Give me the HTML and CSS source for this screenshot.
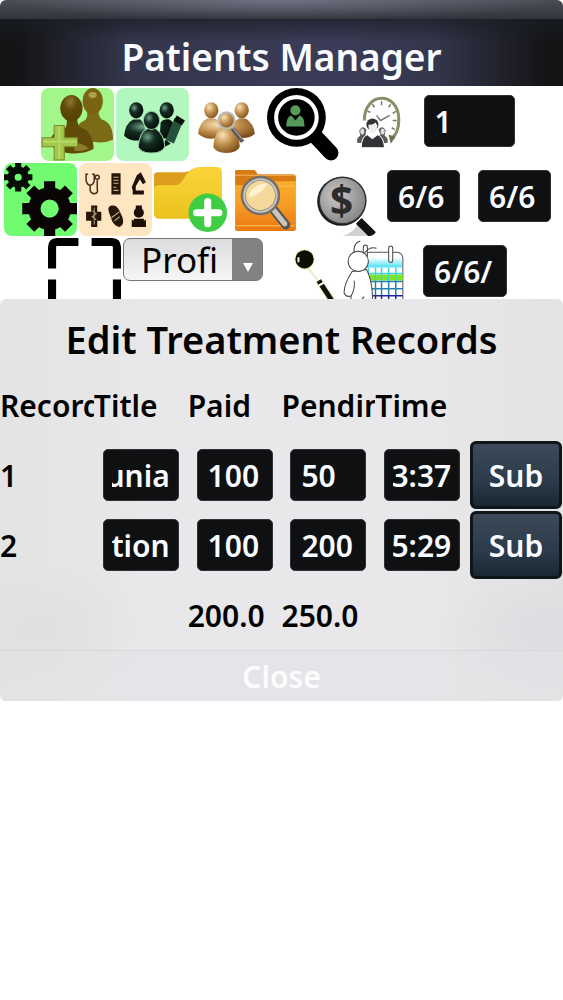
FILE: index.html
```html
<!DOCTYPE html>
<html lang="en">
<head>
  <meta charset="UTF-8">
  <meta name="viewport" content="width=device-width, initial-scale=1.0">
  <title>Patients Manager</title>
  <link rel="stylesheet" href="styles.css">
</head>
<body>

  <header class="title-bar">
    <h1>Patients Manager</h1>
  </header>

  <!-- TOOLBAR -->
  <main class="toolbar">
    <div class="tool-row">
      <button class="tool mint" aria-label="Add patient">
        <svg viewBox="0 0 72 72">
          <defs>
            <radialGradient id="olive" cx="45%" cy="25%" r="80%"><stop offset="0" stop-color="#8f7a2a"/><stop offset=".4" stop-color="#5f4a0a"/><stop offset="1" stop-color="#554000"/></radialGradient>
            <radialGradient id="ink" cx="35%" cy="35%" r="70%"><stop offset="0" stop-color="#6fa385"/><stop offset=".4" stop-color="#142d22"/><stop offset="1" stop-color="#020a06"/></radialGradient>
            <radialGradient id="gold" cx="35%" cy="30%" r="75%"><stop offset="0" stop-color="#f8e2b4"/><stop offset=".5" stop-color="#c1904e"/><stop offset="1" stop-color="#80501c"/></radialGradient>
          </defs>
          <path d="M35 42 Q36 34 43 32 Q47 29 45 21 H57 Q56 28 60 31 Q71 34 71 51 Q62 55 51 53 Z" fill="#7a6c16"/>
          <ellipse cx="51" cy="13" rx="10" ry="13" fill="#7a6414"/>
          <ellipse cx="51" cy="7" rx="4" ry="3" fill="#b0a050"/>
          <path d="M9 52 Q10 44 22 41 Q27 38 25 28 H36 Q35 36 39 39 Q51 42 52 60 Q42 66 26 64 Q10 62 9 52 Z" fill="#604c08"/>
          <path d="M33 54 Q43 55 47 60 Q41 63 33 62 Z" fill="#8d7c2c"/>
          <ellipse cx="30" cy="20" rx="11" ry="13" fill="url(#olive)"/>
          <path d="M13 37 H23 V49 H36 V58 H23 V71 H13 V58 H1 V49 H13 Z" fill="#a3c84d" stroke="#788c28"/>
          <path d="M18 38 V70 M2 53 H35" stroke="#b8d968" stroke-width="2"/>
        </svg>
      </button>
      <button class="tool pale-mint" aria-label="Edit patient">
        <svg viewBox="0 0 72 72">
          <path d="M8 47 Q9 35 17 31 H24 Q30 36 29 51 Q15 54 8 47 Z M43 50 L44 34 Q47 30 53 31 Q60 35 59 49 Z" fill="url(#ink)"/>
          <ellipse cx="20" cy="22" rx="7" ry="8" fill="url(#ink)"/>
          <ellipse cx="50" cy="22" rx="7" ry="8" fill="url(#ink)"/>
          <path d="M62 31 L53 53" stroke="#26523c" stroke-width="9"/>
          <path d="M60 27 L68 32 L65 37 L57 32 Z" fill="#07110b"/>
          <path d="M49 51 L46 59 L54 55 Z" fill="#07110b"/>
          <path d="M22 58 Q23 44 31 40 H39 Q48 46 48 58 Q46 64 35 64 Q24 64 22 58 Z" fill="url(#ink)" stroke="#94caa3"/>
          <ellipse cx="35" cy="32" rx="8" ry="9" fill="url(#ink)" stroke="#94caa3"/>
        </svg>
      </button>
      <button class="tool" aria-label="Find patient">
        <svg viewBox="0 0 72 72">
          <path d="M7 45 Q8 34 16 30 H24 Q32 35 32 47 Q17 54 7 45 Z M40 46 Q40 34 47 30 H54 Q62 35 63 45 Q54 53 40 46 Z" fill="url(#gold)"/>
          <ellipse cx="20" cy="22" rx="7" ry="8" fill="url(#gold)"/>
          <ellipse cx="50" cy="22" rx="7" ry="8" fill="url(#gold)"/>
          <path d="M22 58 Q23 43 30 39 H40 Q48 45 48 58 Q46 64 35 64 Q24 64 22 58 Z" fill="url(#gold)"/>
          <circle cx="35" cy="32" r="8" fill="url(#gold)" stroke="#b9bbb9" stroke-width="2"/>
          <path d="M41 40 L51 53" stroke="#59595b" stroke-width="4"/>
          <path d="M41 39 L51 51" stroke="#b5b5b8"/>
        </svg>
      </button>
      <button class="tool" aria-label="View patient">
        <svg viewBox="0 0 72 72">
          <path d="M48 47 L64 64" stroke="#000" stroke-width="15" stroke-linecap="round"/>
          <circle cx="30" cy="29" r="29" fill="#000"/>
          <circle cx="30" cy="29" r="20" fill="none" stroke="#fff" stroke-width="4"/>
          <circle cx="29" cy="22" r="5" fill="#579b59"/>
          <path d="M20 38 Q20 28 25 27 L29 32 L33 27 Q38 28 38 38 Z" fill="#579b59"/>
        </svg>
      </button>
      <button class="tool" aria-label="Waiting list">
        <svg viewBox="0 0 72 72">
          <path d="M23 32 C23 3 57 3 57 31 Q57 43 51 49" fill="none" stroke="#8b8e67" stroke-width="3"/>
          <path d="M47 46 L54 48 L49 55 Z" fill="#6d704f"/>
          <path d="M40 13 V17 M31 16 L33 19 M49 16 L47 19 M26 23 L29 24 M54 23 L51 25 M55 32 H51 M53 41 L50 39" stroke="#777b58" stroke-width="1.5"/>
          <path d="M35 27 L39 32 L48 27" fill="none" stroke="#777" stroke-width="1.5"/>
          <path d="M16 54 Q15 49 19 47 L18 42 Q21 36 25 41 L24 47 L27 49 V55 Z M36 55 L37 48 L39 46 L37 41 Q41 36 44 42 L43 47 Q47 49 46 54 Z" fill="#595959"/>
          <ellipse cx="21" cy="43" rx="2" ry="3" fill="#ddd"/>
          <ellipse cx="41" cy="43" rx="2" ry="3" fill="#ddd"/>
          <path d="M20 59 Q20 48 26 46 L31 50 L36 46 Q42 48 43 59 Z" fill="#333237" stroke="#fff"/>
          <circle cx="31" cy="36" r="6" fill="#333237"/>
          <path d="M27 36 Q31 37 34 34 L36 37 Q35 44 31 45 Q27 43 27 36 Z" fill="#eee"/>
        </svg>
      </button>
      <input class="field number" type="text" value="1" aria-label="Patient number">
    </div>

    <div class="tool-row">
      <button class="tool green" aria-label="Settings">
        <svg viewBox="0 0 72 72">
          <g stroke="#080d03">
            <circle cx="14" cy="14" r="7" fill="none" stroke-width="7"/>
            <path d="M14 0 V8 M14 20 V28 M0 14 H8 M20 14 H28 M4 4 L9 9 M19 19 L24 24 M24 4 L19 9 M9 19 L4 24" stroke-width="6"/>
          </g>
          <g stroke="#080504">
            <circle cx="45" cy="45" r="15" fill="none" stroke-width="12"/>
            <path d="M45 18 V30 M45 60 V72 M18 45 H30 M60 45 H72 M26 26 L35 35 M55 55 L64 64 M64 26 L55 35 M35 55 L26 64" stroke-width="11"/>
          </g>
        </svg>
      </button>
      <button class="tool cream" aria-label="Treatments">
        <svg viewBox="0 0 72 72">
          <g fill="none" stroke="#42301d" stroke-width="1.5">
            <path d="M9 11 H7 V17 Q8 22 11 22 Q15 21 15 17 V11 H13 M11 22 V27 Q12 31 16 30 Q19 30 18 25 V17"/>
            <circle cx="18" cy="14" r="2"/>
          </g>
          <path d="M32 10 H41 V31 H32 Z" fill="#251607"/>
          <path d="M34 14 H39 M34 17 H39 M34 20 H39 M34 24 H37 M34 27 H39" stroke="#ceb490"/>
          <path d="M57 12 L61 9 L66 19 L63 21 L60 16 L56 23 V27 H64 V31 H53 V27 L52 24 Z" fill="#1d1006"/>
          <path d="M12 42 H18 V48 H22 V57 H18 V63 H12 V57 H7 V48 H12 Z" fill="#251607"/>
          <path d="M15 44 V61 M13 47 L17 50 L13 53 L17 56" fill="none" stroke="#b29b7c"/>
          <path d="M30 50 Q27 43 32 42 Q37 41 40 47 L43 54 Q45 61 40 63 Q36 63 33 58 Z" fill="#251607"/>
          <path d="M32 54 L40 48 M35 57 L40 53" stroke="#cfb694"/>
          <circle cx="59" cy="49" r="5" fill="#1d1006"/>
          <path d="M56 42 H62 V48 H56 Z M54 55 H64 V59 H54 Z M52 56 L59 59 L66 56 V63 H52 Z" fill="#1d1006"/>
        </svg>
      </button>
      <button class="tool" aria-label="New folder">
        <svg viewBox="0 0 72 72">
          <defs>
            <linearGradient id="yellow" x2="0" y2="1"><stop offset="0" stop-color="#fbd43b"/><stop offset="1" stop-color="#eac31e"/></linearGradient>
          </defs>
          <path d="M0 12 Q0 9 4 9 H30 Q35 9 38 6 V30 H0 Z" fill="#dd9e1d"/>
          <path d="M0 26 Q0 22 4 22 H21 Q26 22 30 14 Q37 4 44 4 H62 Q67 4 67 9 V50 Q67 55 62 55 H5 Q0 55 0 50 Z" fill="url(#yellow)"/>
          <circle cx="53" cy="49" r="19" fill="#3fce43"/>
          <path d="M53 38 V60 M42 49 H64" stroke="#fff" stroke-width="7" stroke-linecap="round"/>
        </svg>
      </button>
      <button class="tool" aria-label="Search folder">
        <svg viewBox="0 0 72 72">
          <defs>
            <linearGradient id="orange" x2="0" y2="1"><stop offset="0" stop-color="#f9ad2d"/><stop offset=".45" stop-color="#f89d25"/><stop offset="1" stop-color="#e87813"/></linearGradient>
          </defs>
          <path d="M6 8 Q6 7 8 7 H24 Q27 7 28 11 H63 Q66 11 66 14 V25 H6 Z" fill="#d97b14"/>
          <path d="M6 12 H65" stroke="#f1b65c"/>
          <path d="M6 22 H26 L30 18 H66 V65 Q66 67 64 67 H8 Q6 67 6 65 Z" fill="url(#orange)"/>
          <path d="M34 23 H65 M7 62 H65" stroke="#ffc255"/>
          <path d="M44 46 L56 61" stroke="#5c5550" stroke-width="9" stroke-linecap="round"/>
          <path d="M43 45 L55 60" stroke="#c9c6c2" stroke-width="5" stroke-linecap="round"/>
          <circle cx="31" cy="32" r="17" fill="#f4d99a" stroke="#777069" stroke-width="5"/>
          <circle cx="31" cy="32" r="16" fill="none" stroke="#c9c6c2" stroke-width="2"/>
          <path d="M19 34 Q21 21 38 20 Q33 31 19 34 Z" fill="#fff2cf"/>
        </svg>
      </button>
      <button class="tool" aria-label="Payments">
        <svg viewBox="0 0 72 72">
          <defs>
            <radialGradient id="lens" cx="38%" cy="40%" r="65%"><stop offset="0" stop-color="#c9c9c9"/><stop offset="1" stop-color="#858585"/></radialGradient>
          </defs>
          <path d="M38 72 Q50 68 53 60 L66 72 Z" fill="#d5d1d2"/>
          <path d="M54 57 L71 74" stroke="#101010" stroke-width="8"/>
          <circle cx="37" cy="38" r="24" fill="#171717"/>
          <circle cx="38" cy="37" r="23" fill="url(#lens)" stroke="#303030" stroke-width="1.5"/>
          <text class="dollar" x="37" y="51" text-anchor="middle">$</text>
        </svg>
      </button>
      <input class="field date" type="text" value="6/6" aria-label="From date">
      <input class="field date" type="text" value="6/6" aria-label="To date">
    </div>

    <div class="tool-row">
      <button class="tool" aria-label="Full screen">
        <svg viewBox="0 0 72 72">
          <path d="M4 30 V9 Q4 4 9 4 H30 M43 4 H63 Q68 4 68 9 V30 M4 41 V63 Q4 68 9 68 H30 M43 68 H63 Q68 68 68 63 V41" fill="none" stroke="#000" stroke-width="8"/>
        </svg>
      </button>
      <span class="select-box">
        <select aria-label="Section">
          <option>Profile</option>
          <option>Records</option>
        </select>
      </span>
      <button class="tool" aria-label="Dental tools">
        <svg viewBox="0 0 72 72">
          <path d="M42 29 L54 44" stroke="#e6eec8" stroke-width="2"/>
          <circle cx="39" cy="21" r="10" fill="#e6f5b2"/>
          <circle cx="39" cy="21" r="9" fill="#0c1002"/>
          <path d="M33 19 V24" stroke="#f1f6d8" stroke-width="2"/>
          <path d="M53 42 L70 68" stroke="#eef7cd" stroke-width="8"/>
          <path d="M53 42 L70 68" stroke="#11130a" stroke-width="5"/>
          <path d="M53 47 L58 44" stroke="#fff" stroke-width="2"/>
        </svg>
      </button>
      <button class="tool" aria-label="Appointments">
        <svg viewBox="0 0 72 72">
          <defs>
            <linearGradient id="sky" x2="0" y2="1"><stop offset="0" stop-color="#fff"/><stop offset="1" stop-color="#4ee2f4"/></linearGradient>
          </defs>
          <rect x="23" y="14" width="39" height="56" rx="6" fill="#fff" stroke="#555"/>
          <path d="M24 19 H61 V29 H24 Z" fill="url(#sky)"/>
          <path d="M29 36 H62 V42 H29 Z" fill="#80e323"/>
          <path d="M28 29 V43 M35 29 V43 M41 29 V43 M48 29 V43 M55 29 V43 M29 35 H62" stroke="#42d3dd" stroke-width="1.5"/>
          <path d="M29 43 H62 M29 50 H62 M35 43 V57 M41 43 V57 M48 43 V57 M55 43 V57" stroke="#2781ae" stroke-width="1.5"/>
          <path d="M29 57 H62 M35 57 V70 M41 57 V70 M48 57 V70 M55 57 V70" stroke="#25259b" stroke-width="1.5"/>
          <g fill="#fff" stroke="#444">
            <rect x="23" y="7" width="4" height="12" rx="2"/>
            <rect x="48" y="8" width="4" height="16" rx="2"/>
            <path d="M12 33 Q4 45 4 54 Q6 59 11 57 L10 70 H32 Q33 43 26 31 Z"/>
            <circle cx="18" cy="23" r="10"/>
            <path d="M14 14 Q13 5 20 3 M24 15 Q29 8 36 10 M14 42 Q15 51 11 57 M20 70 Q20 60 24 58" fill="none"/>
          </g>
        </svg>
      </button>
      <input class="field day" type="text" value="6/6/" aria-label="Appointment date">
    </div>
  </main>

  <!-- EDIT DIALOG -->
  <section class="dialog" role="dialog" aria-labelledby="dialog-title">
    <h2 id="dialog-title">Edit Treatment Records</h2>
    <table class="records">
      <thead>
        <tr><th>Record</th><th>Title</th><th>Paid</th><th>Pending</th><th>Time</th><th></th></tr>
      </thead>
      <tbody>
        <tr>
          <td>1</td>
          <td><input class="field end" type="text" value="unia" aria-label="Title 1"></td>
          <td><input class="field" type="text" value="100" aria-label="Paid 1"></td>
          <td><input class="field" type="text" value="50" aria-label="Pending 1"></td>
          <td><input class="field end" type="text" value="3:37" aria-label="Time 1"></td>
          <td><button class="submit">Sub</button></td>
        </tr>
        <tr>
          <td>2</td>
          <td><input class="field end" type="text" value="tion" aria-label="Title 2"></td>
          <td><input class="field" type="text" value="100" aria-label="Paid 2"></td>
          <td><input class="field" type="text" value="200" aria-label="Pending 2"></td>
          <td><input class="field end" type="text" value="5:29" aria-label="Time 2"></td>
          <td><button class="submit">Sub</button></td>
        </tr>
      </tbody>
      <tfoot>
        <tr><td></td><td></td><td>200.0</td><td>250.0</td><td></td><td></td></tr>
      </tfoot>
    </table>
    <button class="close">Close</button>
  </section>

</body>
</html>
```
FILE: styles.css
```css
* {
  box-sizing: border-box;
}

body {
  margin: 0;
  background: #fff;
  color: #030304;
  font-family: "Noto Sans", "Open Sans", sans-serif;
  font-size: 30px;
  font-weight: 600;
}

button, input, select {
  font: inherit;
}

h1, h2 {
  margin: 0;
  font-size: 38px;
  font-weight: 600;
  text-align: center;
}

.title-bar {
  height: 86px;
  padding-top: 29px;
  border-radius: 6px 6px 0 0;
  background:
    radial-gradient(ellipse 50% 20px at 50% 0, rgba(150, 150, 175, 0.5), transparent) top / 100% 19px no-repeat,
    linear-gradient(to bottom, #4b4c55, #32343d) top / 100% 19px no-repeat,
    linear-gradient(to bottom, rgba(25, 30, 36, 0.7) 19px, rgba(25, 30, 36, 0) 42px),
    linear-gradient(to right, #141416 3%, #34364c 23%, #3b3c58 60%, #34364c 77%, #141416 97%);
  color: #f8fbff;
}

.title-bar h1 {
  font-size: 37px;
  line-height: 56px;
}

/* Toolbar */
.toolbar {
  padding-top: 2px;
}

.tool-row {
  display: flex;
  justify-content: center;
  gap: 2px;
  height: 75px;
}

.tool {
  flex: none;
  width: 73px;
  height: 73px;
  padding: 0;
  border: 0;
  border-radius: 8px;
  background: none;
  overflow: hidden;
}

.tool svg {
  display: block;
  width: 100%;
  height: 100%;
}

.mint {
  background: #a3f78a;
}

.pale-mint {
  background: #b2f7bd;
}

.green {
  background: #70fb70;
}

.cream {
  background: #fee6c2;
}

.dollar {
  font-size: 40px;
  font-weight: 700;
  fill: #2c2c2c;
}

.field {
  display: block;
  width: 76px;
  height: 52px;
  margin: 0 auto;
  padding: 0 8px 0 10px;
  border: 1px solid #303135;
  border-radius: 5px;
  background: #0e1012;
  color: #f8fbff;
}

.tool-row .field {
  flex: none;
  margin: 7px 8px 0;
}

.tool-row .number {
  width: 91px;
}

.tool-row .date {
  width: 73px;
}

.tool-row .day {
  width: 84px;
}

/* long values show their last characters */
.end {
  padding-left: 8px;
  direction: rtl;
}

.select-box {
  position: relative;
  width: 140px;
}

.select-box select {
  appearance: none;
  width: 100%;
  height: 43px;
  padding: 0 42px 0 17px;
  border: 1px solid #77777a;
  border-radius: 7px;
  background: linear-gradient(to right, transparent calc(100% - 30px), #828285 calc(100% - 30px)), linear-gradient(#dcdcde, #f6f6f6);
  color: #000;
  font-size: 35px;
  font-weight: 400;
  line-height: 41px;
}

.select-box::after {
  content: "";
  position: absolute;
  top: 25px;
  right: 10px;
  border: 5px solid transparent;
  border-top: 9px solid #fff;
  border-bottom: 0;
  pointer-events: none;
}

/* Dialog, lies over the last toolbar row */
.dialog {
  position: relative;
  margin-top: -14px;
  border-radius: 6px;
  background:
    radial-gradient(ellipse at 97% 82%, #dddce0, transparent 14%),
    radial-gradient(ellipse at 7% 82%, #e0e0e1, transparent 14%),
    linear-gradient(to right, #e3e4e3, #e8e7e9 25%, #e8e7e9 75%, #e3e3e4);
  overflow: hidden;
}

.dialog h2 {
  line-height: 81px;
  height: 71px;
}

.records {
  width: 100%;
  table-layout: fixed;
  border-collapse: collapse;
}

.records tr {
  height: 70px;
}

.records th,
.records td {
  padding: 0;
  text-align: left;
  white-space: nowrap;
  overflow: hidden;
}

.records th {
  font-weight: 600;
}

.submit {
  display: block;
  width: 92px;
  height: 68px;
  margin: 0 auto;
  padding: 0;
  border: 3px solid #101519;
  border-radius: 6px;
  background: linear-gradient(#3b4959, #2c3b4a 60%, #192732);
  color: #f8fbff;
}

.close {
  display: block;
  width: 100%;
  height: 51px;
  padding: 0;
  border: 0;
  border-top: 1px solid #d8d7da;
  background: rgba(228, 226, 230, 0.4);
  color: #fcfcfd;
}
```
